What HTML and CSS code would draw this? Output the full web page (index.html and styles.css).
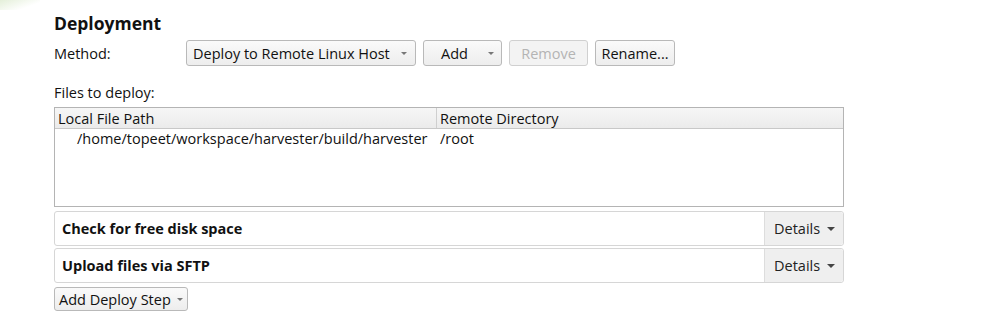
FILE: index.html
```html
<!DOCTYPE html>
<html lang="en">
<head>
    <meta charset="UTF-8">
    <title>Deployment</title>
    <link rel="stylesheet" href="styles.css">
</head>
<body>
    <div class="corner"></div>
    <div class="panel">
        <h2 class="title">Deployment</h2>

        <div class="method-row">
            <span class="label">Method:</span>
            <button class="btn combo">Deploy to Remote Linux Host <span class="arrow"></span></button>
            <button class="btn add">Add <span class="arrow"></span></button>
            <button class="btn remove" disabled>Remove</button>
            <button class="btn rename">Rename...</button>
        </div>

        <div class="files-label">Files to deploy:</div>

        <div class="files">
            <div class="files-head">
                <div class="col local">Local File Path</div>
                <div class="col remote">Remote Directory</div>
            </div>
            <div class="files-row">
                <div class="col local">/home/topeet/workspace/harvester/build/harvester</div>
                <div class="col remote">/root</div>
            </div>
        </div>

        <div class="step">
            <span class="step-name">Check for free disk space</span>
            <button class="details">Details <span class="arrow dark"></span></button>
        </div>
        <div class="step">
            <span class="step-name">Upload files via SFTP</span>
            <button class="details">Details <span class="arrow dark"></span></button>
        </div>

        <button class="btn add-step">Add Deploy Step <span class="arrow"></span></button>
    </div>
</body>
</html>
```

FILE: styles.css
```css
body {
    margin: 0;
    background-color: #ffffff;
    font-family: "Open Sans", "Liberation Sans", sans-serif;
    font-size: 14.5px;
    color: #111111;
    position: relative;
}

.corner {
    position: absolute;
    left: 0;
    top: 0;
    width: 40px;
    height: 10px;
    background: linear-gradient(160deg, #e4efd9 0%, #ffffff 70%);
}

.panel {
    width: 790px;
    padding: 11px 0 0 54px;
}

.title {
    margin: 0;
    font-size: 17.5px;
    font-weight: bold;
    line-height: 24px;
}

.method-row {
    display: flex;
    align-items: center;
    gap: 7px;
    margin-top: 5px;
}

.method-row .label {
    width: 125px;
}

.btn {
    font-family: inherit;
    font-size: 14.5px;
    color: #111111;
    height: 26px;
    padding: 0 6px;
    border: 1px solid #b9b9b9;
    border-radius: 3px;
    background: linear-gradient(#fafafa, #ededed);
    display: inline-flex;
    align-items: center;
    justify-content: space-between;
    white-space: nowrap;
}

.arrow {
    display: inline-block;
    width: 0;
    height: 0;
    border-left: 3px solid transparent;
    border-right: 3px solid transparent;
    border-top: 3px solid #777777;
    margin-left: 6px;
}

.arrow.dark {
    border-left-width: 4px;
    border-right-width: 4px;
    border-top: 4px solid #444444;
    margin-left: 3px;
    vertical-align: middle;
    position: relative;
    top: -1px;
}

.combo {
    width: 230px;
    padding-right: 8px;
}

.add {
    width: 79px;
    padding-left: 17px;
    padding-right: 7px;
}

.remove {
    width: 79px;
    justify-content: center;
    color: #b4b4b4;
    border-color: #d0d0d0;
    background: #f3f3f3;
}

.rename {
    width: 80px;
    justify-content: center;
    padding: 0 2px;
}

.files-label {
    margin-top: 16px;
    line-height: 21px;
}

.files {
    margin-top: 4px;
    height: 98px;
    border: 1px solid #b4b4b4;
}

.files-head {
    display: flex;
    height: 20px;
    border-bottom: 1px solid #c8c8c8;
    background: linear-gradient(#f6f6f6, #ebebeb);
}

.files-head .col {
    line-height: 21px;
}

.files-head .local {
    border-right: 1px solid #cfcfcf;
}

.col.local {
    width: 378px;
    padding-left: 3px;
}

.col.remote {
    padding-left: 3px;
}

.files-row {
    display: flex;
    line-height: 19px;
}

.files-row .local {
    padding-left: 22px;
    width: 360px;
    white-space: nowrap;
}

.files-row .remote {
    padding-left: 3px;
}

.step {
    display: flex;
    align-items: center;
    justify-content: space-between;
    height: 33px;
    margin-top: 4px;
    border: 1px solid #d6d6d6;
    border-radius: 3px;
}

.step + .step {
    margin-top: 2px;
}

.step-name {
    font-weight: bold;
    padding-left: 7px;
}

.details {
    font-family: inherit;
    font-size: 14.5px;
    color: #222222;
    height: 33px;
    width: 79px;
    border: none;
    border-left: 1px solid #dddddd;
    background: #efefef;
    border-radius: 0 3px 3px 0;
    padding: 0 0 0 9px;
    text-align: left;
}

.add-step {
    margin-top: 4px;
    height: 24px;
    width: 134px;
    padding: 0 5px 0 4px;
}
```
